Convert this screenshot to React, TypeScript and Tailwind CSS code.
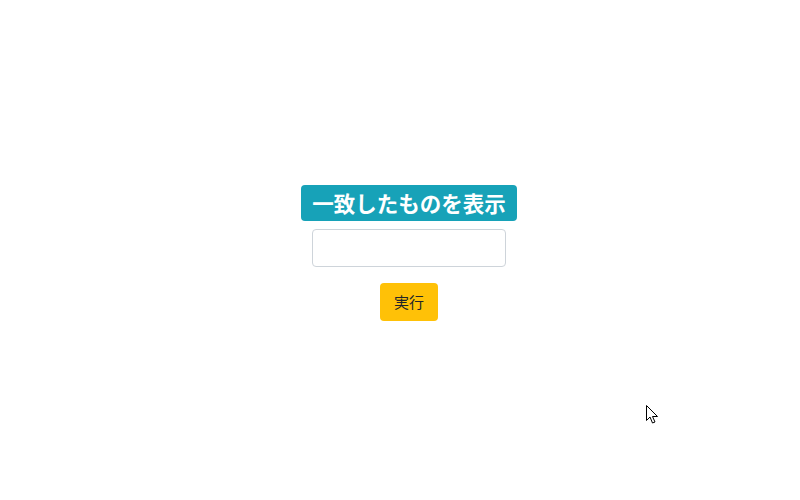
import React from "react";

export default function App() {
  return (
    <div
      className="relative w-[800px] h-[500px] bg-white overflow-hidden"
      style={{ fontFamily: '"Noto Sans CJK JP", sans-serif' }}
    >
      <div className="flex flex-col items-center pt-[185px] pl-[18px]">
        <div className="h-[36px] px-[11px] flex items-center rounded-[4px] bg-[#17a2b8] text-white text-[21.5px] font-bold leading-none">
          一致したものを表示
        </div>
        <input
          type="text"
          className="mt-[8px] w-[194px] h-[38px] border border-[#ced4da] rounded-[4px] outline-none px-3"
        />
        <button className="mt-[16px] w-[58px] h-[38px] rounded-[4px] bg-[#ffc107] text-[#212529] text-[15px] flex items-center justify-center">
          実行
        </button>
      </div>
      <svg
        className="absolute left-[646px] top-[405px]"
        width="14"
        height="20"
        viewBox="0 0 14 20"
      >
        <path
          d="M0.5 0.5 L0.5 15.5 L4 12 L6.5 18 L9 17 L6.5 11.5 L11.5 11.5 Z"
          fill="white"
          stroke="black"
          strokeWidth="1"
          strokeLinejoin="miter"
        />
      </svg>
    </div>
  );
}
